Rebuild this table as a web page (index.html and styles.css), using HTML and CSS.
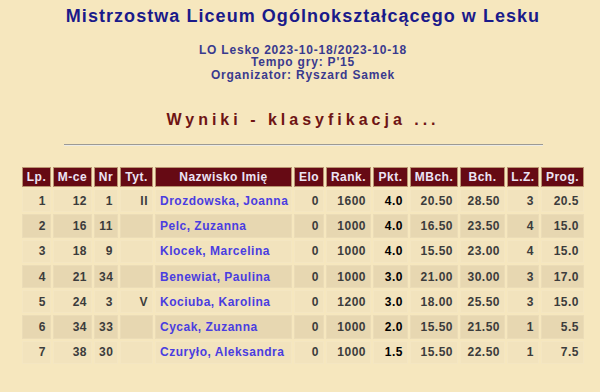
FILE: index.html
```html
<!DOCTYPE html>
<html lang="pl">
<head>
<meta charset="utf-8">
<title>Wyniki - klasyfikacja</title>
<link rel="stylesheet" href="styles.css">
</head>
<body>
<div class="page">
  <h1 class="title">Mistrzostwa Liceum Ogólnokształcącego w Lesku</h1>
  <div class="info">
    <div>LO Lesko 2023-10-18/2023-10-18</div>
    <div>Tempo gry: P'15</div>
    <div>Organizator: Ryszard Samek</div>
  </div>
  <h2 class="section">Wyniki - klasyfikacja ...</h2>
  <hr class="rule">
  <table class="results">
    <thead>
      <tr>
        <th class="c-lp">Lp.</th>
        <th class="c-mce">M-ce</th>
        <th class="c-nr">Nr</th>
        <th class="c-tyt">Tyt.</th>
        <th class="c-name">Nazwisko Imię</th>
        <th class="c-elo">Elo</th>
        <th class="c-rank">Rank.</th>
        <th class="c-pkt">Pkt.</th>
        <th class="c-mbch">MBch.</th>
        <th class="c-bch">Bch.</th>
        <th class="c-lz">L.Z.</th>
        <th class="c-prog">Prog.</th>
      </tr>
    </thead>
    <tbody>
      <tr class="odd"><td>1</td><td>12</td><td>1</td><td>II</td><td class="name">Drozdowska, Joanna</td><td>0</td><td>1600</td><td class="pkt">4.0</td><td>20.50</td><td>28.50</td><td>3</td><td>20.5</td></tr>
      <tr class="even"><td>2</td><td>16</td><td>11</td><td></td><td class="name">Pelc, Zuzanna</td><td>0</td><td>1000</td><td class="pkt">4.0</td><td>16.50</td><td>23.50</td><td>4</td><td>15.0</td></tr>
      <tr class="odd"><td>3</td><td>18</td><td>9</td><td></td><td class="name">Klocek, Marcelina</td><td>0</td><td>1000</td><td class="pkt">4.0</td><td>15.50</td><td>23.00</td><td>4</td><td>15.0</td></tr>
      <tr class="even"><td>4</td><td>21</td><td>34</td><td></td><td class="name">Benewiat, Paulina</td><td>0</td><td>1000</td><td class="pkt">3.0</td><td>21.00</td><td>30.00</td><td>3</td><td>17.0</td></tr>
      <tr class="odd"><td>5</td><td>24</td><td>3</td><td>V</td><td class="name">Kociuba, Karolina</td><td>0</td><td>1200</td><td class="pkt">3.0</td><td>18.00</td><td>25.50</td><td>3</td><td>15.0</td></tr>
      <tr class="even"><td>6</td><td>34</td><td>33</td><td></td><td class="name">Cycak, Zuzanna</td><td>0</td><td>1000</td><td class="pkt">2.0</td><td>15.50</td><td>21.50</td><td>1</td><td>5.5</td></tr>
      <tr class="odd"><td>7</td><td>38</td><td>30</td><td></td><td class="name">Czuryło, Aleksandra</td><td>0</td><td>1000</td><td class="pkt">1.5</td><td>15.50</td><td>22.50</td><td>1</td><td>7.5</td></tr>
    </tbody>
  </table>
</div>
</body>
</html>
```
FILE: styles.css
```css
html, body {
  margin: 0;
  padding: 0;
  background: #f6e7be;
}

body {
  font-family: "Liberation Sans", Arial, sans-serif;
}

.page {
  padding: 6px 0 0 6px;
  text-align: center;
}

.title {
  margin: 0;
  font-size: 18px;
  line-height: 21px;
  font-weight: bold;
  letter-spacing: 1.05px;
  color: #1a1a8a;
}

.info {
  margin-top: 16.5px;
  font-size: 12px;
  line-height: 12.5px;
  font-weight: bold;
  letter-spacing: 0.8px;
  color: #3a3a8e;
}

.section {
  margin: 29.5px 0 0 0;
  font-size: 16px;
  line-height: 18px;
  font-weight: bold;
  letter-spacing: 4px;
  color: #6e1414;
}

.rule {
  width: 479px;
  height: 0;
  margin: 15.5px auto 19px auto;
  border: 0;
  border-top: 1px solid #9c9a94;
  border-bottom: 1px solid #ecebe6;
}

.results {
  width: 566px;
  margin: 0 auto;
  table-layout: fixed;
  border-collapse: separate;
  border-spacing: 2px;
  font-size: 12px;
  font-weight: bold;
  letter-spacing: 0.5px;
}

.results th,
.results td {
  box-sizing: border-box;
  padding: 0 4px;
  white-space: nowrap;
  overflow: hidden;
}

.results th {
  height: 20px;
  background: #660a14;
  border: 1px solid #b99470;
  color: #ece4f4;
  text-align: center;
  padding: 0;
}

.results td {
  height: 23.3px;
  border: 1px solid transparent;
  color: #3c3c3c;
  text-align: right;
}

.results tr.odd td {
  background: #f2e3bd;
  border-color: #f4e6c2;
}

.results tr.even td {
  background: #e7d7b1;
  border-color: #ebdcb7;
}

.results td.name {
  text-align: left;
  color: #4a3de0;
}

.results td.pkt {
  color: #000;
}

.c-lp { width: 29px; }
.c-mce { width: 39px; }
.c-nr { width: 24px; }
.c-tyt { width: 33px; }
.c-name { width: 137px; }
.c-elo { width: 30px; }
.c-rank { width: 45px; }
.c-pkt { width: 35px; }
.c-mbch { width: 48px; }
.c-bch { width: 45px; }
.c-lz { width: 32px; }
.c-prog { width: 43px; }
```
